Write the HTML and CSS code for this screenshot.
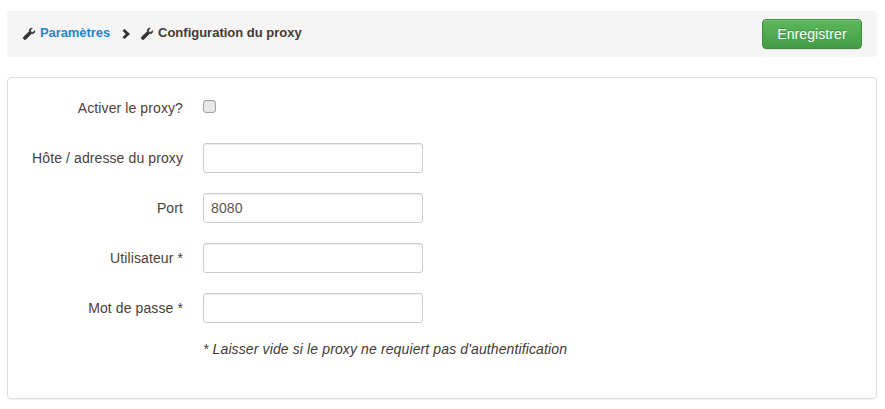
FILE: index.html
```html
<!DOCTYPE html>
<html lang="fr">
<head>
<meta charset="utf-8">
<title>Configuration du proxy</title>
<link rel="stylesheet" href="styles.css">
</head>
<body>
<div class="topbar">
  <div class="crumbs">
    <svg class="wrench first" viewBox="0 0 14 14"><path d="M13.6 3.100c.2.900 0 1.900-.7 2.600-.8.800-2 1-3 .7L3.600 13c-.7.700-1.800.700-2.500 0l-.2-.2c-.7-.7-.7-1.800 0-2.500l6.600-6.300c-.3-1-.1-2.200.7-3C8.900.3 9.900.1 10.800.3L8.700 2.400l.4 2.300 2.300.5z"/></svg>
    <a class="link" href="#">Paramètres</a>
    <svg class="chev" viewBox="0 0 9 10"><path d="M.5 1.800 2.500 0 8 5l-5.500 5-2-1.800L3.800 5z"/></svg>
    <svg class="wrench" viewBox="0 0 14 14"><path d="M13.6 3.100c.2.900 0 1.900-.7 2.600-.8.800-2 1-3 .7L3.600 13c-.7.700-1.800.700-2.500 0l-.2-.2c-.7-.7-.7-1.800 0-2.500l6.600-6.300c-.3-1-.1-2.200.7-3C8.900.3 9.900.1 10.800.3L8.700 2.400l.4 2.300 2.300.5z"/></svg>
    <span class="current">Configuration du proxy</span>
  </div>
  <button class="save" type="button">Enregistrer</button>
</div>
<form class="panel">
  <div class="row check-row">
    <label class="lbl" for="f0">Activer le proxy?</label>
    <input class="check" id="f0" type="checkbox">
  </div>
  <div class="row">
    <label class="lbl" for="f1">Hôte / adresse du proxy</label>
    <input class="field" id="f1" type="text">
  </div>
  <div class="row">
    <label class="lbl" for="f2">Port</label>
    <input class="field" id="f2" type="text" value="8080">
  </div>
  <div class="row">
    <label class="lbl" for="f3">Utilisateur *</label>
    <input class="field" id="f3" type="text">
  </div>
  <div class="row">
    <label class="lbl" for="f4">Mot de passe *</label>
    <input class="field" id="f4" type="password">
  </div>
  <p class="note">* Laisser vide si le proxy ne requiert pas d'authentification</p>
</form>
</body>
</html>
```
FILE: styles.css
```css
* { box-sizing: border-box; }
html, body { margin: 0; padding: 0; }
body {
  background: #fff;
  width: 885px;
  height: 409px;
  overflow: hidden;
  padding: 11px 8px 0 7px;
  font-family: "Liberation Sans", Arial, sans-serif;
  font-size: 14px;
  line-height: 20px;
  color: #333;
}
.topbar {
  height: 46px;
  background: #f5f5f5;
  border-radius: 4px;
  display: flex;
  align-items: center;
  justify-content: space-between;
  padding: 0 15px;
}
.crumbs {
  display: flex;
  align-items: center;
  font-weight: bold;
  font-size: 13px;
  margin-top: -1px;
}
.crumbs span, .crumbs a { position: relative; top: -1px; }
.wrench { width: 12px; height: 12px; fill: #333; stroke: #333; stroke-width: .9; flex: none; overflow: visible; }
.first { margin-left: 1px; }
.chev { width: 9px; height: 10px; fill: #333; flex: none; margin: 0 10px 0 12px; }
.link { color: #1f86cc; text-decoration: none; margin-left: 5px; letter-spacing: -.08px; }
.current { color: #443a34; margin-left: 5px; }
.save {
  width: 100px;
  height: 30px;
  padding: 0;
  color: #fff;
  font: 14px/20px "Liberation Sans", Arial, sans-serif;
  letter-spacing: .1px;
  border: 1px solid #3e8f3e;
  border-radius: 4px;
  background: linear-gradient(to bottom, #5cb85c 0, #459c45 100%);
  text-shadow: 0 -1px 0 rgba(0,0,0,.2);
  box-shadow: inset 0 1px 0 rgba(255,255,255,.15), 0 1px 1px rgba(0,0,0,.075);
}
.panel {
  margin-top: 20px;
  height: 322px;
  border: 1px solid #ddd;
  border-radius: 4px;
  box-shadow: 0 1px 1px rgba(0,0,0,.05);
  padding: 15px 0 0;
  display: flex;
  flex-direction: column;
  gap: 20px;
}
.row { display: flex; align-items: center; height: 30px; }
.lbl {
  width: 175px;
  text-align: right;
  color: #4b3f38;
  margin-right: 20px;
  flex: none;
  letter-spacing: .1px;
}
.field {
  width: 220px;
  height: 30px;
  padding: 5px 7px;
  border: 1px solid #ccc;
  border-radius: 3px;
  font: 14px/20px "Liberation Sans", Arial, sans-serif;
  letter-spacing: .12px;
  color: #555;
  background: #fff;
  box-shadow: inset 0 1px 1px rgba(0,0,0,.075);
  outline: none;
}
.check {
  appearance: none;
  -webkit-appearance: none;
  width: 13px;
  height: 13px;
  margin: 0 0 3px;
  border: 1px solid #a3a3a3;
  border-radius: 3px;
  background: #e9e9e9;
  box-shadow: inset 0 0 1px #bbb;
}
.note {
  margin: -4px 0 0 195px;
  font-style: italic;
  color: #443a34;
  letter-spacing: .12px;
}
```
